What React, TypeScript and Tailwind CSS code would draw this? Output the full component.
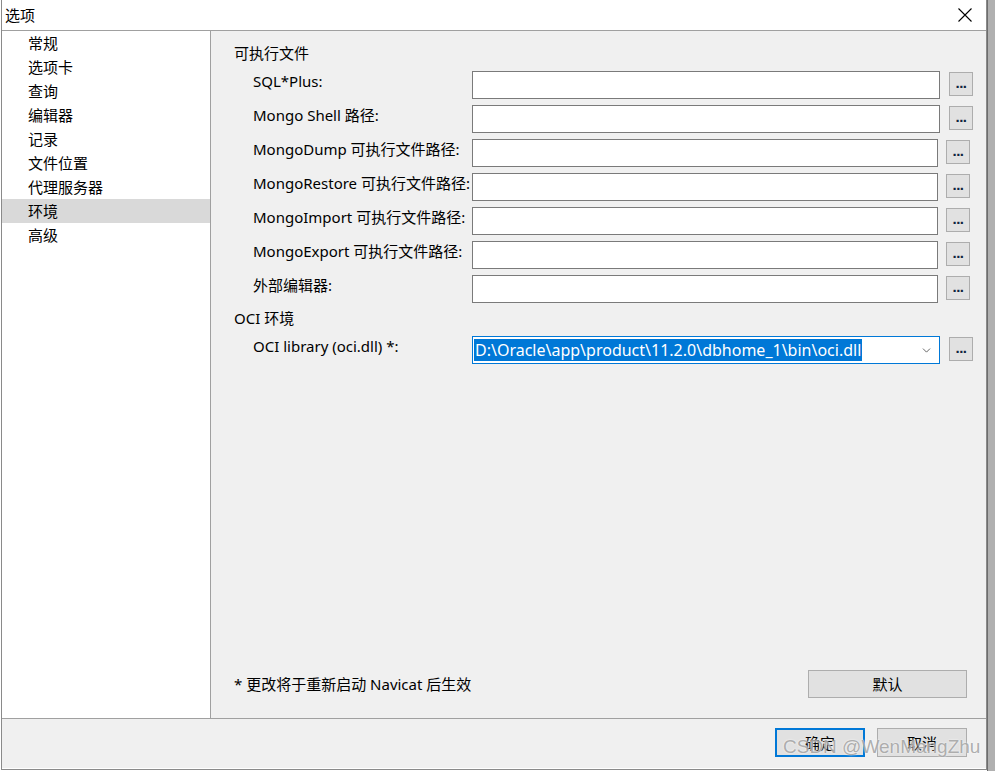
import { ChevronDown } from "lucide-react";

const NAV_ITEMS = ["常规", "选项卡", "查询", "编辑器", "记录", "文件位置", "代理服务器", "环境", "高级"];

const PATH_ROWS = [
  { label: "SQL*Plus:", wide: true },
  { label: "Mongo Shell 路径:", wide: true },
  { label: "MongoDump 可执行文件路径:", wide: false },
  { label: "MongoRestore 可执行文件路径:", wide: false },
  { label: "MongoImport 可执行文件路径:", wide: false },
  { label: "MongoExport 可执行文件路径:", wide: false },
  { label: "外部编辑器:", wide: false },
];

function BrowseButton({ wide }: { wide?: boolean }) {
  return (
    <button
      className={`mt-px flex h-[24px] w-[24px] shrink-0 items-end justify-center border border-[#adadad] bg-[#e1e1e1] pb-[5px] font-['Liberation_Sans',sans-serif] text-[15px] font-bold leading-none tracking-[-0.5px] text-[#102540] ${
        wide ? "ml-[9px]" : "ml-[8px]"
      }`}
    >
      ...
    </button>
  );
}

function PathRow({ label, wide }: { label: string; wide: boolean }) {
  return (
    <div className="flex h-[28px] items-start">
      <div className="ml-[19px] w-[219px] shrink-0 overflow-hidden whitespace-nowrap leading-[20px]">{label}</div>
      <div className={`h-[28px] shrink-0 border border-[#7a7a7a] bg-white ${wide ? "w-[468px]" : "w-[466px]"}`} />
      <BrowseButton wide={wide} />
    </div>
  );
}

export default function App() {
  return (
    <div className="relative flex h-[771px] w-[995px] bg-white font-['Noto_Sans','Noto_Sans_CJK_SC',sans-serif] text-[15px] text-black">
      <div className="ml-px flex h-[770px] w-[986px] shrink-0 flex-col border-x border-b border-[#8a8a8a] bg-white">
        {/* title bar */}
        <div className="flex h-[31px] items-center justify-between border-b border-[#a0a0a0] pl-[3px] pr-[12px]">
          <span className="leading-[20px]">选项</span>
          <svg width="16" height="16" viewBox="0 0 16 16" className="mr-[1px]">
            <path d="M1.5 1.5 L14.5 14.5 M14.5 1.5 L1.5 14.5" stroke="#000" strokeWidth="1.1" />
          </svg>
        </div>

        {/* body */}
        <div className="flex h-[687px]">
          <div className="w-[209px] shrink-0 border-r border-[#a0a0a0] bg-white">
            {NAV_ITEMS.map((item) => (
              <div
                key={item}
                className={`h-[24px] pl-[26px] leading-[24px] ${item === "环境" ? "bg-[#d9d9d9]" : ""}`}
              >
                {item}
              </div>
            ))}
          </div>

          <div className="flex min-w-0 flex-1 flex-col bg-[#f0f0f0] pb-[20px] pl-[23px] pr-[19px] pt-[12px]">
            <div className="h-[20px] leading-[20px]">可执行文件</div>
            <div className="mt-[8px] flex flex-col gap-[6px]">
              {PATH_ROWS.map((row) => (
                <PathRow key={row.label} label={row.label} wide={row.wide} />
              ))}
            </div>

            <div className="mt-[5px] h-[20px] leading-[20px]">OCI 环境</div>
            <div className="mt-[8px] flex h-[28px] items-start">
              <div className="ml-[19px] w-[219px] shrink-0 whitespace-nowrap leading-[20px]">OCI library (oci.dll) *:</div>
              <div className="flex h-[28px] w-[468px] shrink-0 items-center border border-[#0078d7] bg-white pl-px pr-[6px]">
                <span className="bg-[#0078d7] px-px text-[16px] leading-[22px] text-white">
                  D:\Oracle\app\product\11.2.0\dbhome_1\bin\oci.dll
                </span>
                <ChevronDown size={13} strokeWidth={1.5} className="ml-auto text-[#444]" />
              </div>
              <BrowseButton wide />
            </div>

            <div className="mt-auto flex items-center">
              <span className="leading-[20px]">* 更改将于重新启动 Navicat 后生效</span>
              <button className="ml-auto h-[28px] w-[159px] border border-[#adadad] bg-[#e1e1e1] leading-[20px]">
                默认
              </button>
            </div>
          </div>
        </div>

        {/* footer */}
        <div className="flex h-[50px] justify-end gap-[12px] border-t border-[#a0a0a0] bg-[#f0f0f0] pr-[19px] pt-[9px]">
          <button className="h-[29px] w-[90px] border-2 border-[#0078d7] bg-[#e1e1e1] leading-[20px]">确定</button>
          <button className="h-[29px] w-[90px] border border-[#adadad] bg-[#e1e1e1] leading-[20px]">取消</button>
        </div>
      </div>

      <div className="h-[771px] flex-1 border-l border-[#6d6d6d] bg-[#b0b0b0]" />

      <span className="absolute left-[783px] top-[735px] font-['Liberation_Sans',sans-serif] text-[19px] leading-[24px] text-[#9a9a9a]/80 [text-shadow:0_0_2px_#fff]">
        CSDN @WenMangZhu
      </span>
    </div>
  );
}
